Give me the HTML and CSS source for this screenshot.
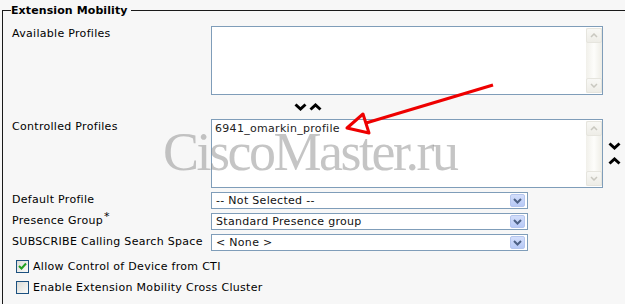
FILE: index.html
```html
<html><head><title>Extension Mobility</title>
<link rel="stylesheet" href="styles.css">
</head>
<body>
<div class="page">
  <fieldset class="group">
    <legend>Extension Mobility</legend>

    <div class="field">
      <div class="label">Available Profiles</div>
      <div class="listbox">
        <div class="options"></div>
        <div class="scrollbar">
          <span class="scroll-btn"><svg width="8" height="5" viewBox="0 0 8 5"><polyline points="1,4 4,1 7,4" fill="none" stroke="#c9c8c0" stroke-width="1.5"/></svg></span>
          <span class="scroll-btn"><svg width="8" height="5" viewBox="0 0 8 5"><polyline points="1,1 4,4 7,1" fill="none" stroke="#c9c8c0" stroke-width="1.5"/></svg></span>
        </div>
      </div>
    </div>

    <div class="movers">
      <svg class="chev" width="13" height="8" viewBox="0 0 13 8"><polyline points="1.5,1.5 6.5,6 11.5,1.5" fill="none" stroke="#000" stroke-width="3"/></svg>
      <svg class="chev" width="13" height="8" viewBox="0 0 13 8"><polyline points="1.5,6.5 6.5,2 11.5,6.5" fill="none" stroke="#000" stroke-width="3"/></svg>
    </div>

    <div class="field">
      <div class="label">Controlled Profiles</div>
      <div class="listbox">
        <div class="options">
          <div class="option">6941_omarkin_profile</div>
        </div>
        <div class="scrollbar">
          <span class="scroll-btn"><svg width="8" height="5" viewBox="0 0 8 5"><polyline points="1,4 4,1 7,4" fill="none" stroke="#c9c8c0" stroke-width="1.5"/></svg></span>
          <span class="scroll-btn"><svg width="8" height="5" viewBox="0 0 8 5"><polyline points="1,1 4,4 7,1" fill="none" stroke="#c9c8c0" stroke-width="1.5"/></svg></span>
        </div>
      </div>
      <div class="order">
        <svg class="chev" width="13" height="8" viewBox="0 0 13 8"><polyline points="1.5,1.5 6.5,6 11.5,1.5" fill="none" stroke="#000" stroke-width="3"/></svg>
        <svg class="chev" width="13" height="8" viewBox="0 0 13 8"><polyline points="1.5,6.5 6.5,2 11.5,6.5" fill="none" stroke="#000" stroke-width="3"/></svg>
      </div>
    </div>

    <div class="field select-row">
      <div class="label">Default Profile</div>
      <div class="select">
        <span class="select-value">-- Not Selected --</span>
        <span class="select-btn"><svg width="9" height="6" viewBox="0 0 9 6"><polyline points="1,1 4.5,4.5 8,1" fill="none" stroke="#4d6185" stroke-width="2"/></svg></span>
      </div>
    </div>
    <div class="field select-row">
      <div class="label">Presence Group<span class="req">*</span></div>
      <div class="select">
        <span class="select-value">Standard Presence group</span>
        <span class="select-btn"><svg width="9" height="6" viewBox="0 0 9 6"><polyline points="1,1 4.5,4.5 8,1" fill="none" stroke="#4d6185" stroke-width="2"/></svg></span>
      </div>
    </div>
    <div class="field select-row">
      <div class="label">SUBSCRIBE Calling Search Space</div>
      <div class="select">
        <span class="select-value">&lt; None &gt;</span>
        <span class="select-btn"><svg width="9" height="6" viewBox="0 0 9 6"><polyline points="1,1 4.5,4.5 8,1" fill="none" stroke="#4d6185" stroke-width="2"/></svg></span>
      </div>
    </div>

    <div class="check first">
      <span class="box"><svg width="11" height="11" viewBox="0 0 11 11"><polyline points="2,5 4.5,7.5 9,2.5" fill="none" stroke="#21a121" stroke-width="2"/></svg></span>
      <span>Allow Control of Device from CTI</span>
    </div>
    <div class="check">
      <span class="box"></span>
      <span>Enable Extension Mobility Cross Cluster</span>
    </div>
  </fieldset>

  <div class="watermark">CiscoMaster.ru</div>

  <svg class="callout" width="625" height="304" viewBox="0 0 625 304">
    <line x1="493" y1="85" x2="366" y2="123" stroke="#ee0000" stroke-width="3"/>
    <polygon points="347,128 363,114 369,133" fill="none" stroke="#ee0000" stroke-width="3" stroke-linejoin="round"/>
  </svg>
</div>
</body>
</html>
```

FILE: styles.css
```css
html, body {
  margin: 0;
  padding: 0;
}
body {
  background-color: #f7f7f7;
  font-family: "DejaVu Sans", Verdana, sans-serif;
  font-size: 11px;
  line-height: 13px;
  letter-spacing: 0.3px;
  color: #000;
  overflow: hidden;
}
.page {
  position: relative;
  width: 625px;
  height: 304px;
  overflow: hidden;
}
.group {
  margin: 4px -40px 0 2px;
  padding: 9px 0 30px 9px;
  border: 1px solid #1a1a1a;
}
.group legend {
  margin-left: -1px;
  padding: 0 3px 0 0;
  font-weight: bold;
  line-height: 13px;
  letter-spacing: 0.1px;
}
.field {
  display: flex;
  align-items: flex-start;
}
.label {
  width: 199px;
  flex: none;
  padding-top: 1px;
}
.req {
  position: relative;
  top: -4px;
  margin-left: 1px;
}
.listbox {
  display: flex;
  width: 392px;
  height: 69px;
  box-sizing: border-box;
  border: 1px solid #7f9db9;
  background-color: #fff;
}
.options {
  flex: 1;
  padding: 2px 3px;
  color: #222;
}
.scrollbar {
  width: 16px;
  margin: 1px 0;
  display: flex;
  flex-direction: column;
  justify-content: space-between;
  background: linear-gradient(to right, #f1f0ea, #fdfdfb 50%, #eeede6);
}
.scroll-btn {
  height: 15px;
  box-sizing: border-box;
  border: 1px solid #e6e5de;
  border-radius: 2px;
  background: linear-gradient(#f8f8f5, #eeede7);
  display: flex;
  align-items: center;
  justify-content: center;
}
.movers {
  display: flex;
  gap: 2px;
  padding: 8px 0 8px 282px;
  height: 8px;
}
.order {
  display: flex;
  flex-direction: column;
  gap: 7px;
  margin: 23px 0 0 5px;
}
.chev {
  display: block;
}
.select-row {
  margin-top: 4px;
}
.select {
  display: flex;
  align-items: flex-start;
  width: 317px;
  height: 17px;
  box-sizing: border-box;
  border: 1px solid #7f9db9;
  background-color: #fff;
}
.select-value {
  flex: 1;
  padding: 1px 0 0 4px;
  color: #111;
}
.select-btn {
  width: 15px;
  height: 13px;
  margin: 1px 2px 0 0;
  box-sizing: border-box;
  border: 1px solid #b5c6ee;
  border-radius: 2px;
  background: linear-gradient(#d3defb, #b7c9f6);
  display: flex;
  align-items: center;
  justify-content: center;
}
.check {
  display: flex;
  align-items: center;
  gap: 4px;
  margin: 8px 0 0 4px;
}
.check.first {
  margin-top: 9px;
}
.check .box {
  width: 13px;
  height: 13px;
  box-sizing: border-box;
  border: 1px solid #1c5180;
  background: linear-gradient(135deg, #dcdcd7, #fbfbf9);
  display: flex;
  align-items: center;
  justify-content: center;
}
.watermark {
  position: absolute;
  left: 163px;
  top: 125px;
  font-family: "Liberation Serif", "Times New Roman", serif;
  font-size: 54px;
  line-height: 54px;
  letter-spacing: -2.5px;
  color: rgba(140, 140, 140, 0.5);
  white-space: nowrap;
}
.callout {
  position: absolute;
  left: 0;
  top: 0;
  pointer-events: none;
}
```
